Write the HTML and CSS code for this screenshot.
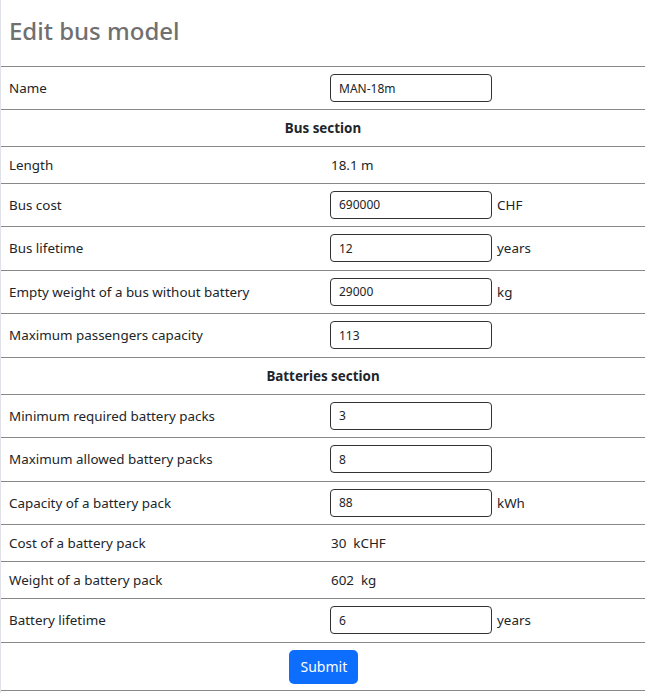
FILE: index.html
```html
<!DOCTYPE html>
<html lang="en">
<head>
  <meta charset="UTF-8" />
  <meta name="viewport" content="width=device-width, initial-scale=1" />
  <title>Edit bus model</title>
  <link rel="stylesheet" href="styles.css">
</head>
<body>

  <div class="page">
    <h1 class="title">Edit bus model</h1>

    <form id="bus-form">
      <table class="model-table">
        <tbody>
          <tr class="first">
            <td class="label">Name</td>
            <td><div class="field"><input type="text" id="name" value="MAN-18m" /></div></td>
          </tr>
          <tr class="section">
            <td colspan="2">Bus section</td>
          </tr>
          <tr>
            <td class="label">Length</td>
            <td class="value">18.1 m</td>
          </tr>
          <tr>
            <td class="label">Bus cost</td>
            <td><div class="field"><input type="number" id="busCost" value="690000" /><span>CHF</span></div></td>
          </tr>
          <tr>
            <td class="label">Bus lifetime</td>
            <td><div class="field"><input type="number" id="busLifetime" value="12" /><span>years</span></div></td>
          </tr>
          <tr>
            <td class="label">Empty weight of a bus without battery</td>
            <td><div class="field"><input type="number" id="emptyWeight" value="29000" /><span>kg</span></div></td>
          </tr>
          <tr>
            <td class="label">Maximum passengers capacity</td>
            <td><div class="field"><input type="number" id="maxPassengers" value="113" /></div></td>
          </tr>
          <tr class="section">
            <td colspan="2">Batteries section</td>
          </tr>
          <tr>
            <td class="label">Minimum required battery packs</td>
            <td><div class="field"><input type="number" id="minPacks" value="3" /></div></td>
          </tr>
          <tr>
            <td class="label">Maximum allowed battery packs</td>
            <td><div class="field"><input type="number" id="maxPacks" value="8" /></div></td>
          </tr>
          <tr>
            <td class="label">Capacity of a battery pack</td>
            <td><div class="field"><input type="number" id="packCapacity" value="88" /><span>kWh</span></div></td>
          </tr>
          <tr>
            <td class="label">Cost of a battery pack</td>
            <td class="value">30&nbsp; kCHF</td>
          </tr>
          <tr>
            <td class="label">Weight of a battery pack</td>
            <td class="value">602&nbsp; kg</td>
          </tr>
          <tr>
            <td class="label">Battery lifetime</td>
            <td><div class="field"><input type="number" id="batteryLifetime" value="6" /><span>years</span></div></td>
          </tr>
          <tr class="actions">
            <td colspan="2"><button type="submit" class="submit-btn">Submit</button></td>
          </tr>
        </tbody>
      </table>
    </form>
  </div>

</body>
</html>
```

FILE: styles.css
```css
body {
  font-family: "Noto Sans", "Open Sans", sans-serif;
  font-size: 13.4px;
  color: #212529;
  background: white;
  margin: 0;
  padding: 0;
}

.page {
  border-left: 1px solid #dfe3e8;
  margin-right: 8px;
  min-height: 693px;
}

.title {
  font-size: 24px;
  font-weight: 500;
  color: #707070;
  margin: 0;
  padding: 14px 8px 18px;
  line-height: 34px;
}

.model-table {
  width: 100%;
  border-collapse: collapse;
  border-top: 1px solid #888;
}

.model-table td {
  padding: 8px;
  border-bottom: 1px solid #888;
  vertical-align: middle;
  line-height: 20px;
}

.model-table td.label {
  width: 50%;
}

.model-table tr.first td {
  padding-bottom: 7px;
}

.section td {
  text-align: center;
  font-weight: 700;
}

.field {
  display: flex;
  align-items: center;
  gap: 5px;
  height: 28px;
  margin: -1px 0 -0.5px -1px;
}

.field input {
  width: 162px;
  height: 28px;
  box-sizing: border-box;
  padding: 2px 8px;
  font-family: inherit;
  font-size: 12px;
  color: #212529;
  border: 1px solid #333;
  border-radius: 4px;
  -moz-appearance: textfield;
}

.field input::-webkit-outer-spin-button,
.field input::-webkit-inner-spin-button {
  -webkit-appearance: none;
  margin: 0;
}

.actions td {
  text-align: center;
  padding: 7px 8px 6px;
}

.submit-btn {
  background: #0d6efd;
  color: white;
  border: none;
  border-radius: 5px;
  font-family: inherit;
  font-size: 14px;
  padding: 6px 12px;
  height: 34px;
  width: 69px;
  cursor: pointer;
}
```
